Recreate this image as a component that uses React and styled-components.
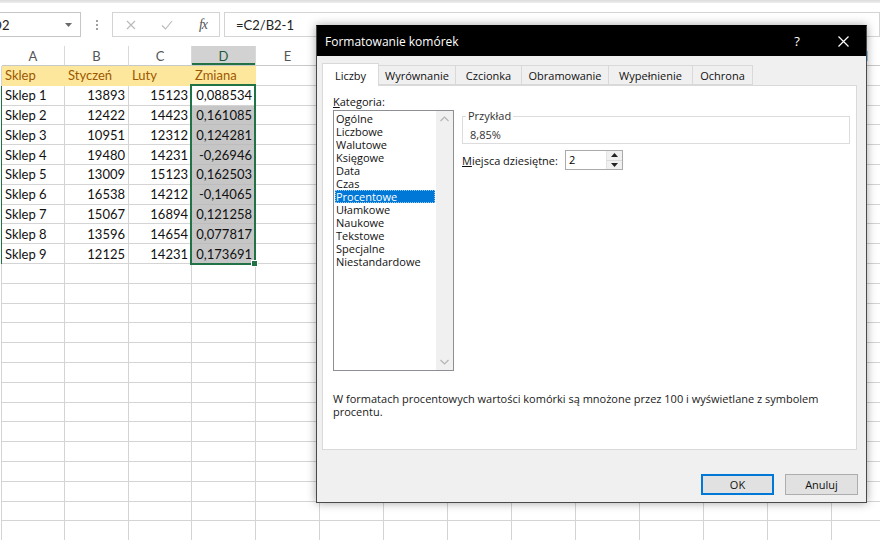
import React from 'react';
import styled, { createGlobalStyle } from 'styled-components';

const GlobalStyle = createGlobalStyle`
  html, body {
    margin: 0;
    padding: 0;
    background: #fff;
    overflow: hidden;
  }
`

const COLS = ['A', 'B', 'C', 'D', 'E', 'F', 'G', 'H', 'I', 'J', 'K', 'L', 'M', 'N'];
const WIDTHS = [63, 64, 63, 64, 64, 64, 64, 64, 64, 64, 64, 64, 64, 64];
const HEAD = ['Sklep', 'Styczeń', 'Luty', 'Zmiana'];
const DATA = [
  ['Sklep 1', '13893', '15123', '0,088534'],
  ['Sklep 2', '12422', '14423', '0,161085'],
  ['Sklep 3', '10951', '12312', '0,124281'],
  ['Sklep 4', '19480', '14231', '-0,26946'],
  ['Sklep 5', '13009', '15123', '0,162503'],
  ['Sklep 6', '16538', '14212', '-0,14065'],
  ['Sklep 7', '15067', '16894', '0,121258'],
  ['Sklep 8', '13596', '14654', '0,077817'],
  ['Sklep 9', '12125', '14231', '0,173691'],
];
const ROW_COUNT = 25;

const TABS = [
  { label: 'Liczby', width: 57, active: true },
  { label: 'Wyrównanie', width: 77 },
  { label: 'Czcionka', width: 66 },
  { label: 'Obramowanie', width: 87 },
  { label: 'Wypełnienie', width: 84 },
  { label: 'Ochrona', width: 60 },
];
const CATEGORIES = ['Ogólne', 'Liczbowe', 'Walutowe', 'Księgowe', 'Data', 'Czas', 'Procentowe',
  'Ułamkowe', 'Naukowe', 'Tekstowe', 'Specjalne', 'Niestandardowe'];

const Screen = styled.div`
  position: relative;
  width: 880px;
  height: 540px;
  overflow: hidden;
  background: #fff;
  font-family: Lato, "Liberation Sans", sans-serif;
`

// ---------- formula bar ----------
const TopStrip = styled.div`
  height: 3px;
  background: linear-gradient(#dcdcdc, #eeeeee);
`
const FormulaBar = styled.div`
  display: flex;
  align-items: flex-start;
  height: 43px;
  padding-top: 9px;
  box-sizing: border-box;
`
const NameBox = styled.div`
  display: flex;
  align-items: center;
  justify-content: space-between;
  width: 93px;
  height: 25px;
  margin-left: -12px;
  padding: 0 8px 0 3px;
  box-sizing: border-box;
  border: 1px solid #c6c6c6;
  font-size: 13px;
  color: #222;
`
const Dots = styled.div`
  display: flex;
  flex-direction: column;
  align-items: center;
  justify-content: center;
  gap: 2px;
  width: 31px;
  height: 25px;

  span {
    width: 2px;
    height: 2px;
    background: #a0a0a0;
  }
`
const FxBox = styled.div`
  display: flex;
  align-items: center;
  gap: 16px;
  width: 108px;
  height: 25px;
  padding-left: 8px;
  box-sizing: border-box;
  border: 1px solid #d4d4d4;
`
const IconSlot = styled.div`
  width: 20px;
  display: flex;
  justify-content: center;
  align-items: center;
`
const FxText = styled.span`
  font-family: "Liberation Serif", serif;
  font-style: italic;
  font-size: 14px;
  color: #555;
  letter-spacing: -1px;
`
const FormulaInput = styled.div`
  flex: 1;
  display: flex;
  align-items: center;
  height: 25px;
  margin-left: 4px;
  padding-left: 11px;
  box-sizing: border-box;
  border: 1px solid #d4d4d4;
  font-size: 13px;
  color: #222;
`

// ---------- grid ----------
const Grid = styled.div`
  position: relative;
  display: grid;
  grid-template-columns: 2px ${WIDTHS.map(w => w + 'px').join(' ')};
  grid-template-rows: 20px;
  grid-auto-rows: 19.8px;
`
const Stub = styled.div`
  box-sizing: border-box;
  border-right: 1px solid ${p => (p.$sel ? '#217346' : p.$head ? 'transparent' : '#d4d4d4')};
`
const ColHead = styled.div`
  display: flex;
  align-items: center;
  justify-content: center;
  box-sizing: border-box;
  border-right: 1px solid #d9d9d9;
  border-bottom: 1px solid #c8c8c8;
  background: ${p => (p.$sel ? '#d2d2d2' : '#fff')};
  box-shadow: ${p => (p.$sel ? 'inset 0 -2px 0 #217346' : 'none')};
  color: ${p => (p.$sel ? '#1e5a3a' : '#555')};
  font-size: 13px;
`
const fills = {
  neutral: { bg: '#fde79c', line: '#fde79c', color: '#9c5700' },
  sel: { bg: '#c6c6c6', line: '#bdbdbd', color: '#111' },
  none: { bg: '#fff', line: '#d4d4d4', color: '#111' },
};
const Cell = styled.div`
  display: flex;
  align-items: center;
  justify-content: ${p => (p.$right ? 'flex-end' : 'flex-start')};
  padding: 0 ${p => (p.$right ? '3px' : '0')} 0 ${p => (p.$right ? '0' : '3px')};
  box-sizing: border-box;
  border-right: 1px solid ${p => fills[p.$fill].line};
  border-bottom: 1px solid ${p => fills[p.$fill].line};
  background: ${p => fills[p.$fill].bg};
  color: ${p => fills[p.$fill].color};
  font-size: 13px;
  white-space: nowrap;
  overflow: hidden;
`
const Selection = styled.div`
  position: absolute;
  left: 190px;
  top: 38px;
  width: 66px;
  height: 181px;
  box-sizing: border-box;
  border: 2px solid #217346;
  pointer-events: none;
`
const FillHandle = styled.div`
  position: absolute;
  left: 251px;
  top: 214px;
  width: 7px;
  height: 7px;
  box-sizing: border-box;
  background: #217346;
  border: 1px solid #fff;
`

// ---------- dialog ----------
const Dialog = styled.div`
  position: absolute;
  left: 316px;
  top: 25px;
  width: 551px;
  height: 478px;
  box-sizing: border-box;
  display: flex;
  flex-direction: column;
  border: 1px solid #4a4a4a;
  border-top-color: #000;
  background: #f0f0f0;
  box-shadow: 0 0 9px rgba(0, 0, 0, 0.35);
  font-family: "Open Sans", "Noto Sans", sans-serif;
  font-size: 11px;
  color: #000;
`
const TitleBar = styled.div`
  display: flex;
  align-items: center;
  height: 30px;
  background: #000;
  color: #fff;
  font-size: 12px;
  padding-left: 8px;
`
const Title = styled.div`
  flex: 1;
`
const TitleButton = styled.div`
  width: 46px;
  height: 30px;
  display: flex;
  align-items: center;
  justify-content: center;
  font-size: 13px;
  line-height: 16px;
`
const Body = styled.div`
  flex: 1;
  display: flex;
  flex-direction: column;
  padding: 7px 9px 7px 5px;
`
const Tabs = styled.div`
  display: flex;
  align-items: flex-end;
  height: 22px;
  position: relative;
  z-index: 1;
`
const Tab = styled.div`
  display: flex;
  align-items: center;
  justify-content: center;
  box-sizing: border-box;
  height: ${p => (p.$active ? '23px' : '20px')};
  margin-bottom: ${p => (p.$active ? '-1px' : '0')};
  border: 1px solid #d9d9d9;
  border-bottom: ${p => (p.$active ? 'none' : '1px solid #d9d9d9')};
  border-left-width: ${p => (p.$first ? '1px' : '0')};
  background: ${p => (p.$active ? '#fff' : '#f0f0f0')};
  color: #111;
`
const Panel = styled.div`
  flex: 1;
  display: flex;
  flex-direction: column;
  background: #fff;
  border: 1px solid #d9d9d9;
  padding: 8px 6px 0 10px;
`
const TopRow = styled.div`
  display: flex;
  gap: 8px;
`
const LeftCol = styled.div`
  width: 121px;
  display: flex;
  flex-direction: column;
`
const Label = styled.div`
  line-height: 15px;
  margin-bottom: 1px;
  color: #111;
`
const ListBox = styled.div`
  display: flex;
  height: 261px;
  box-sizing: border-box;
  border: 1px solid #8e8f94;
  background: #fff;
`
const ListItems = styled.ul`
  flex: 1;
  margin: 0;
  padding: 1px;
  list-style: none;
`
const ListItem = styled.li`
  height: 13px;
  line-height: 13px;
  padding-left: 1px;
  background: ${p => (p.$selected ? '#0078d7' : 'transparent')};
  color: ${p => (p.$selected ? '#fff' : '#111')};
  outline: ${p => (p.$selected ? '1px dotted #9cc9ee' : 'none')};
  outline-offset: -1px;
`
const ScrollTrack = styled.div`
  width: 17px;
  background: #f0f0f0;
  display: flex;
  flex-direction: column;
  justify-content: space-between;
  align-items: center;
  padding: 5px 0;
`
const RightCol = styled.div`
  flex: 1;
  display: flex;
  flex-direction: column;
`
const Group = styled.fieldset`
  margin: 15px 0 0 0;
  padding: 5px 7px 1px 7px;
  border: 1px solid #dcdcdc;
  line-height: 14px;
  color: #333;
`
const Legend = styled.legend`
  padding: 0 2px;
  margin-left: -4px;
  line-height: 14px;
  color: #333;
`
const SpinRow = styled.div`
  display: flex;
  align-items: center;
  height: 20px;
  margin-top: 6px;
`
const SpinLabel = styled.div`
  width: 103px;
  color: #111;
`
const SpinBox = styled.div`
  display: flex;
  width: 58px;
  height: 20px;
  box-sizing: border-box;
  border: 1px solid #aaaaaa;
`
const SpinValue = styled.div`
  flex: 1;
  padding-left: 3px;
  line-height: 18px;
`
const SpinButtons = styled.div`
  width: 15px;
  display: flex;
  flex-direction: column;
  border-left: 1px solid #e3e3e3;
`
const SpinButton = styled.div`
  flex: 1;
  display: flex;
  align-items: center;
  justify-content: center;
  background: #f0f0f0;
  border-bottom: ${p => (p.$top ? '1px solid #dadada' : 'none')};
`
const Description = styled.p`
  margin: 21px 0 0 0;
  line-height: 13px;
  color: #1a1a1a;
  width: 500px;
`
const Footer = styled.div`
  display: flex;
  justify-content: flex-end;
  gap: 11px;
  margin-top: 24px;
  margin-right: -1px;
`
const Button = styled.div`
  width: 73px;
  height: 21px;
  box-sizing: border-box;
  display: flex;
  align-items: center;
  justify-content: center;
  background: #e1e1e1;
  border: ${p => (p.$primary ? '2px solid #0078d7' : '1px solid #adadad')};
  color: #111;
`

function Chevron({ up }) {
  return (
    <svg width="9" height="6" viewBox="0 0 9 6">
      <polyline points={up ? '0.5,5 4.5,1 8.5,5' : '0.5,1 4.5,5 8.5,1'} fill="none" stroke="#b4b4b4" strokeWidth="1.2" />
    </svg>
  );
}

function Triangle({ up }) {
  return (
    <svg width="7" height="4" viewBox="0 0 7 4">
      <polygon points={up ? '0,4 3.5,0 7,4' : '0,0 3.5,4 7,0'} fill="#222" />
    </svg>
  );
}

function Sheet() {
  const cells = [];
  for (let r = 1; r <= ROW_COUNT; r++) {
    const sel = r >= 2 && r <= 10;
    cells.push(<Stub key={`s${r}`} $sel={sel} />);
    COLS.forEach((c, ci) => {
      let text = '';
      let fill = 'none';
      let right = false;
      if (r === 1 && ci < 4) {
        text = HEAD[ci];
        fill = 'neutral';
      } else if (sel && ci < 4) {
        text = DATA[r - 2][ci];
        right = ci > 0;
        if (ci === 3 && r > 2) fill = 'sel';
      }
      cells.push(
        <Cell key={`${c}${r}`} $fill={fill} $right={right}>{text}</Cell>
      );
    });
  }

  return (
    <>
      <TopStrip />
      <FormulaBar>
        <NameBox>
          <span>D2</span>
          <svg width="7" height="4" viewBox="0 0 7 4"><polygon points="0,0 7,0 3.5,4" fill="#6a6a6a" /></svg>
        </NameBox>
        <Dots><span /><span /><span /></Dots>
        <FxBox>
          <IconSlot>
            <svg width="10" height="10" viewBox="0 0 10 10">
              <path d="M1 1 L9 9 M9 1 L1 9" stroke="#b8b8b8" strokeWidth="1.1" />
            </svg>
          </IconSlot>
          <IconSlot>
            <svg width="12" height="10" viewBox="0 0 12 10">
              <path d="M1 5.5 L4.5 9 L11 1" fill="none" stroke="#b8b8b8" strokeWidth="1.1" />
            </svg>
          </IconSlot>
          <IconSlot><FxText>fx</FxText></IconSlot>
        </FxBox>
        <FormulaInput>=C2/B2-1</FormulaInput>
      </FormulaBar>
      <Grid>
        <Stub $head />
        {COLS.map(c => (
          <ColHead key={c} $sel={c === 'D'}>{c}</ColHead>
        ))}
        {cells}
        <Selection />
        <FillHandle />
      </Grid>
    </>
  );
}

function FormatDialog() {
  return (
    <Dialog>
      <TitleBar>
        <Title>Formatowanie komórek</Title>
        <TitleButton>?</TitleButton>
        <TitleButton>
          <svg width="11" height="11" viewBox="0 0 11 11">
            <path d="M0.5 0.5 L10.5 10.5 M10.5 0.5 L0.5 10.5" stroke="#fff" strokeWidth="1.2" />
          </svg>
        </TitleButton>
      </TitleBar>
      <Body>
        <Tabs>
          {TABS.map((t, i) => (
            <Tab key={t.label} $active={t.active} $first={i === 0} style={{ width: t.width }}>
              {t.label}
            </Tab>
          ))}
        </Tabs>
        <Panel>
          <TopRow>
            <LeftCol>
              <Label><u>K</u>ategoria:</Label>
              <ListBox>
                <ListItems>
                  {CATEGORIES.map(c => (
                    <ListItem key={c} $selected={c === 'Procentowe'}>{c}</ListItem>
                  ))}
                </ListItems>
                <ScrollTrack>
                  <Chevron up />
                  <Chevron />
                </ScrollTrack>
              </ListBox>
            </LeftCol>
            <RightCol>
              <Group>
                <Legend>Przykład</Legend>
                8,85%
              </Group>
              <SpinRow>
                <SpinLabel><u>M</u>iejsca dziesiętne:</SpinLabel>
                <SpinBox>
                  <SpinValue>2</SpinValue>
                  <SpinButtons>
                    <SpinButton $top><Triangle up /></SpinButton>
                    <SpinButton><Triangle /></SpinButton>
                  </SpinButtons>
                </SpinBox>
              </SpinRow>
            </RightCol>
          </TopRow>
          <Description>
            W formatach procentowych wartości komórki są mnożone przez 100 i wyświetlane z symbolem procentu.
          </Description>
        </Panel>
        <Footer>
          <Button $primary>OK</Button>
          <Button>Anuluj</Button>
        </Footer>
      </Body>
    </Dialog>
  );
}

export default function App() {
  return (
    <Screen>
      <GlobalStyle />
      <Sheet />
      <FormatDialog />
    </Screen>
  );
}
